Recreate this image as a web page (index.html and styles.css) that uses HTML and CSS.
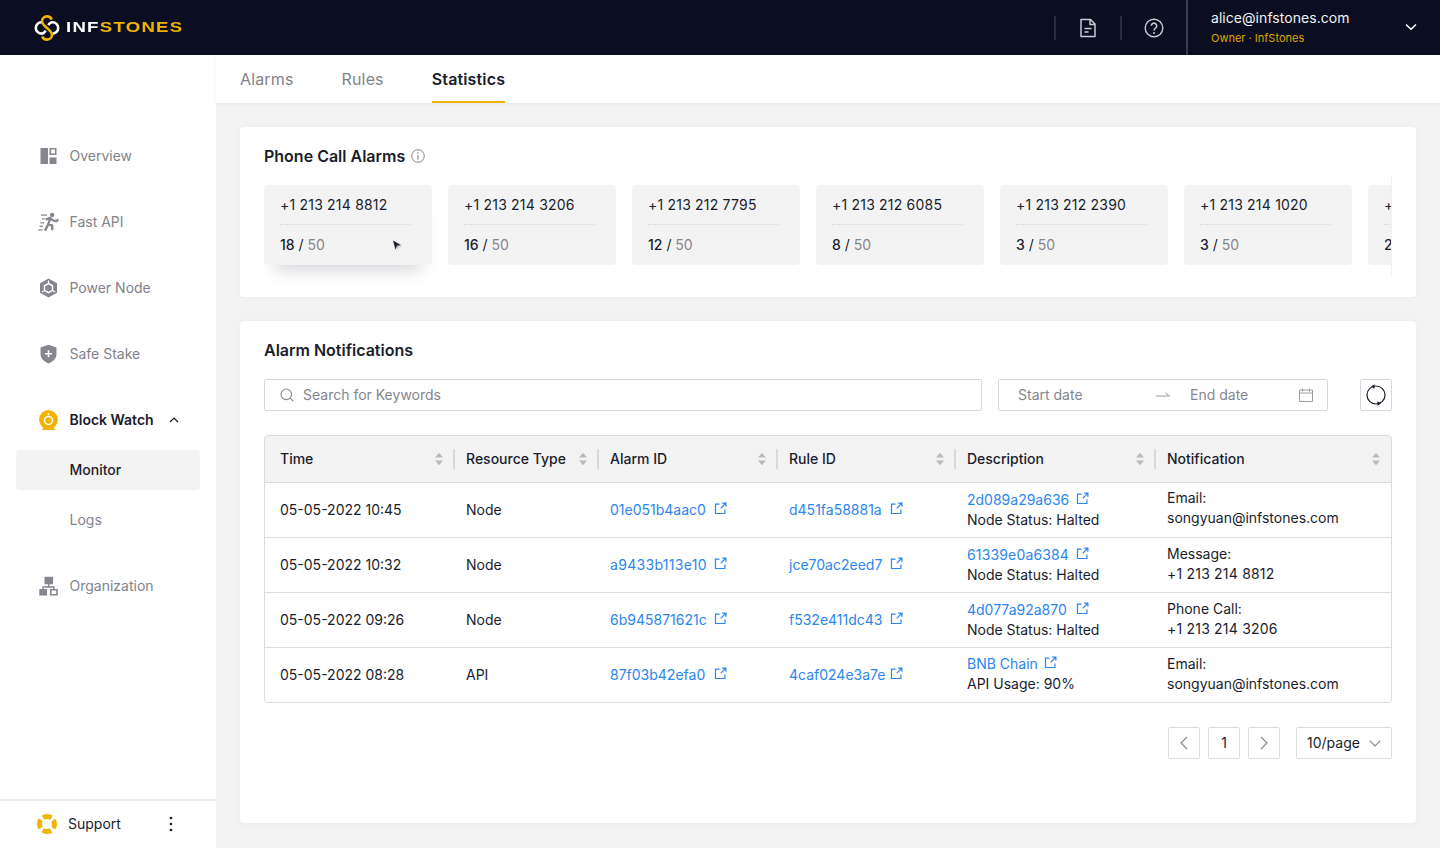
FILE: index.html
```html
<!DOCTYPE html>
<html lang="en">
<head>
<meta charset="utf-8">
<title>InfStones Block Watch</title>
<link rel="stylesheet" href="styles.css">
</head>
<body>
<svg class="defs" width="0" height="0" aria-hidden="true">
  <symbol id="ext" viewBox="0 0 14 14"><path d="M6 2.200H1.600v10.200h10.200V8M7.200 6.800 12.400 1.600M8.800 1.200h4v4" fill="none" stroke="currentColor" stroke-width="1.300"/></symbol>
  <symbol id="sort" viewBox="0 0 10 14"><path d="M5 .8 9 5.600H1zM5 13.200 1 8.400h8z" fill="currentColor"/></symbol>
</svg>
<header class="topbar">
  <div class="brand">
    <svg class="logo" viewBox="0 0 28 26" width="28" height="26">
      <path d="M8.500 7.200a5.600 5.600 0 1 0 0 11.400c2.400 0 3.400-1.600 4.200-3M19.500 18.600a5.600 5.600 0 1 0 0-11.400c-2.400 0-3.400 1.600-4.200 3" fill="none" stroke="#fff" stroke-width="2.600"/>
      <path d="M18.800 4.600C18 2.600 16.200 1.400 14 1.400c-3 0-5 2.200-5 4.800 0 5 10 8.600 10 13.600 0 2.600-2 4.800-5 4.800-2.200 0-4-1.200-4.800-3.200" fill="none" stroke="#f0b400" stroke-width="2.600"/>
    </svg>
    <span class="wordmark">INF<b>STONES</b></span>
  </div>
  <div class="top-right">
    <span class="tsep"></span>
    <span class="ticon">
      <svg viewBox="0 0 18 20" width="18" height="20"><path d="M2 1.500h9.500L16 6v12.500H2zM11 1.500V6.500h5M5.500 10.500h7M5.500 14h4" fill="none" stroke="#c9cad0" stroke-width="1.500" stroke-linejoin="round"/></svg>
    </span>
    <span class="tsep"></span>
    <span class="ticon">
      <svg viewBox="0 0 20 20" width="20" height="20"><circle cx="10" cy="10" r="8.800" fill="none" stroke="#c9cad0" stroke-width="1.400"/><path d="M7.300 7.800a2.700 2.700 0 1 1 4.200 2.300c-1 .6-1.500 1.100-1.500 2.300" fill="none" stroke="#c9cad0" stroke-width="1.500"/><circle cx="10" cy="15" r="1" fill="#c9cad0"/></svg>
    </span>
    <div class="account">
      <div class="acct-text">
        <div class="email">alice@infstones.com</div>
        <div class="role">Owner · InfStones</div>
      </div>
      <svg class="acct-chev" viewBox="0 0 12 8" width="12" height="8"><path d="M1 1.500 6 6.300l5-4.800" fill="none" stroke="#fff" stroke-width="1.500"/></svg>
    </div>
  </div>
</header>
<div class="shell">
  <aside class="sidebar">
    <nav class="nav">
      <a class="nav-item">
        <svg class="nav-icon" viewBox="0 0 20 20"><path d="M2 2h7.500v16H2zM11 11.500h7V18h-7z" fill="#85868e"/><path d="M11.800 2.800h5.400v5.400h-5.400z" fill="none" stroke="#85868e" stroke-width="1.600"/></svg>
        <span>Overview</span>
      </a>
      <a class="nav-item">
        <svg class="nav-icon" viewBox="0 0 22 20"><circle cx="14.800" cy="2.600" r="2.300" fill="#85868e"/><path d="M8 7.500 12.500 5.600l3 2.600 3.500 1 2.200-1.800M12.800 6.500 10.500 13l-3.200 6M11 12l3.800 1.800.2 4.800" fill="none" stroke="#85868e" stroke-width="2.500"/><path d="M3 2.800h6.500M4 6.800h3M2.500 10.800h4M1.500 14.500h3.500M.3 18.200h4.500" fill="none" stroke="#85868e" stroke-width="1.300"/></svg>
        <span>Fast API</span>
      </a>
      <a class="nav-item">
        <svg class="nav-icon" viewBox="0 0 20 20"><path d="M10 .6 18.500 5.300v9.400L10 19.400l-8.500-4.700V5.300z" fill="#85868e"/><path d="M10 5.500 14 7.800v4.600L10 14.700 6 12.400V7.800z" fill="none" stroke="#fff" stroke-width="1.500"/><path d="M10 5.500V2.500M14 12.400l2.600 1.500M6 12.400l-2.600 1.500" stroke="#fff" stroke-width="1.200"/></svg>
        <span>Power Node</span>
      </a>
      <a class="nav-item">
        <svg class="nav-icon" viewBox="0 0 20 20"><path d="M10 .8 18 3.500V10c0 4.500-3.500 7.500-8 9.500-4.500-2-8-5-8-9.500V3.500z" fill="#85868e"/><path d="M10 6.200v7M6.500 9.700h7" stroke="#fff" stroke-width="1.600"/></svg>
        <span>Safe Stake</span>
      </a>
      <a class="nav-item nav-open">
        <svg class="nav-icon" viewBox="0 0 20 20"><path d="M5 17h10l1.500 3h-13z" fill="#f0b400"/><circle cx="10" cy="9.600" r="9.500" fill="#f0b400"/><circle cx="10" cy="10.500" r="4" fill="none" stroke="#fff" stroke-width="1.500"/><circle cx="10" cy="4.300" r="1" fill="#fff"/></svg>
        <span>Block Watch</span>
        <svg class="nav-chev" viewBox="0 0 10 6" width="10" height="6"><path d="M1 5 5 1l4 4" fill="none" stroke="#1a1d2b" stroke-width="1.200"/></svg>
      </a>
      <a class="sub-item sub-active">Monitor</a>
      <a class="sub-item">Logs</a>
      <a class="nav-item nav-after">
        <svg class="nav-icon" viewBox="0 0 20 20"><path d="M6 .8h8.500v7.400H6zM.8 13h7.800v6.500H.8z" fill="#85868e"/><path d="M10.200 8v3H4.500v2M10.200 11h5.200v2" fill="none" stroke="#85868e" stroke-width="1.400"/><path d="M12.200 13.800h6.300v5h-6.300z" fill="none" stroke="#85868e" stroke-width="1.600"/></svg>
        <span>Organization</span>
      </a>
    </nav>
    <div class="support">
      <svg class="support-icon" viewBox="0 0 20 20" width="20" height="20"><circle cx="10" cy="10" r="7.500" fill="none" stroke="#f0b400" stroke-width="5" stroke-dasharray="8.780 3" stroke-dashoffset="4.390"/></svg>
      <span class="support-label">Support</span>
      <svg class="kebab" viewBox="0 0 4 16" width="4" height="16"><circle cx="2" cy="2" r="1.300" fill="#1a1d2b"/><circle cx="2" cy="8" r="1.300" fill="#1a1d2b"/><circle cx="2" cy="14" r="1.300" fill="#1a1d2b"/></svg>
    </div>
  </aside>
  <main class="main">
    <div class="tabs">
      <a class="tab">Alarms</a>
      <a class="tab">Rules</a>
      <a class="tab tab-active">Statistics</a>
    </div>
    <div class="content">
      <section class="panel panel-phone">
        <h2 class="panel-title">Phone Call Alarms
          <svg class="info" viewBox="0 0 14 14" width="14" height="14"><circle cx="7" cy="7" r="6.300" fill="none" stroke="#85868e"/><path d="M7 6v4.500" stroke="#85868e" stroke-width="1.100"/><circle cx="7" cy="4" r=".8" fill="#85868e"/></svg>
        </h2>
        <div class="phones-wrap">
          <div class="phones">
            <div class="phone phone-hover">
              <div class="phone-num">+1 213 214 8812</div>
              <div class="phone-count"><b>18</b> / <i>50</i></div>
              <svg class="cursor" viewBox="0 0 10 10" width="10" height="10"><path d="M1 .5 9 5.200 5 5.600 3.500 9.500z" fill="#1a1d2b"/></svg>
            </div>
            <div class="phone"><div class="phone-num">+1 213 214 3206</div><div class="phone-count"><b>16</b> / <i>50</i></div></div>
            <div class="phone"><div class="phone-num">+1 213 212 7795</div><div class="phone-count"><b>12</b> / <i>50</i></div></div>
            <div class="phone"><div class="phone-num">+1 213 212 6085</div><div class="phone-count"><b>8</b> / <i>50</i></div></div>
            <div class="phone"><div class="phone-num">+1 213 212 2390</div><div class="phone-count"><b>3</b> / <i>50</i></div></div>
            <div class="phone"><div class="phone-num">+1 213 214 1020</div><div class="phone-count"><b>3</b> / <i>50</i></div></div>
            <div class="phone"><div class="phone-num">+1 213 213 5547</div><div class="phone-count"><b>2</b> / <i>50</i></div></div>
          </div>
        </div>
      </section>
      <section class="panel panel-alarms">
        <h2 class="panel-title">Alarm Notifications</h2>
        <div class="filters">
          <div class="search">
            <svg viewBox="0 0 14 14" width="14" height="14"><circle cx="6.300" cy="6.300" r="5.300" fill="none" stroke="#85868e" stroke-width="1.100"/><path d="m10.200 10.200 3 3" stroke="#85868e" stroke-width="1.100"/></svg>
            <span>Search for Keywords</span>
          </div>
          <div class="dates">
            <span class="date-start">Start date</span>
            <svg class="date-arrow" viewBox="0 0 14 6" width="14" height="6"><path d="M0 4h13.500L9.500 1" fill="none" stroke="#9a9ba2"/></svg>
            <span class="date-end">End date</span>
            <svg viewBox="0 0 14 14" width="14" height="14"><path d="M.5 2h13v11.500H.5zM.5 5h13M3.500 .5v3M10.500 .5v3" fill="none" stroke="#9a9ba2"/></svg>
          </div>
          <button class="refresh" type="button">
            <svg viewBox="0 0 22 22" width="22" height="22"><circle cx="11" cy="11" r="9" fill="none" stroke="#1a1d2b" stroke-width="1.200"/><path d="M9.500 .2v4.600L6 2.500zM12.500 21.800v-4.600l3.500 2.300z" fill="#1a1d2b"/></svg>
          </button>
        </div>
        <div class="table-box">
          <table class="alarms">
            <colgroup><col class="c1"><col class="c2"><col class="c3"><col class="c4"><col class="c5"><col class="c6"></colgroup>
            <thead>
              <tr>
                <th><div class="th">Time<svg class="sort"><use href="#sort"/></svg></div></th>
                <th><div class="th">Resource Type<svg class="sort"><use href="#sort"/></svg></div></th>
                <th><div class="th">Alarm ID<svg class="sort"><use href="#sort"/></svg></div></th>
                <th><div class="th">Rule ID<svg class="sort"><use href="#sort"/></svg></div></th>
                <th><div class="th">Description<svg class="sort"><use href="#sort"/></svg></div></th>
                <th><div class="th">Notification<svg class="sort"><use href="#sort"/></svg></div></th>
              </tr>
            </thead>
            <tbody>
              <tr>
                <td>05-05-2022 10:45</td><td>Node</td>
                <td><a class="idlink alarm-id">01e051b4aac0<svg class="ext"><use href="#ext"/></svg></a></td>
                <td><a class="idlink rule-id">d451fa58881a<svg class="ext"><use href="#ext"/></svg></a></td>
                <td><a class="idlink desc-id">2d089a29a636<svg class="ext"><use href="#ext"/></svg></a><div>Node Status: Halted</div></td>
                <td class="n1">Email:<br>songyuan@infstones.com</td>
              </tr>
              <tr>
                <td>05-05-2022 10:32</td><td>Node</td>
                <td><a class="idlink alarm-id spaced">a9433b113e10<svg class="ext"><use href="#ext"/></svg></a></td>
                <td><a class="idlink rule-id">jce70ac2eed7<svg class="ext"><use href="#ext"/></svg></a></td>
                <td><a class="idlink desc-id spaced-sm">61339e0a6384<svg class="ext"><use href="#ext"/></svg></a><div>Node Status: Halted</div></td>
                <td class="n2">Message:<br><span class="num-line">+1 213 214 8812</span></td>
              </tr>
              <tr>
                <td>05-05-2022 09:26</td><td>Node</td>
                <td><a class="idlink alarm-id">6b945871621c<svg class="ext"><use href="#ext"/></svg></a></td>
                <td><a class="idlink rule-id">f532e411dc43<svg class="ext"><use href="#ext"/></svg></a></td>
                <td><a class="idlink desc-id">4d077a92a870<svg class="ext"><use href="#ext"/></svg></a><div>Node Status: Halted</div></td>
                <td class="n2">Phone Call:<br><span class="num-line">+1 213 214 3206</span></td>
              </tr>
              <tr>
                <td>05-05-2022 08:28</td><td>API</td>
                <td><a class="idlink alarm-id">87f03b42efa0<svg class="ext"><use href="#ext"/></svg></a></td>
                <td><a class="idlink rule-id">4caf024e3a7e<svg class="ext"><use href="#ext"/></svg></a></td>
                <td class="n2"><a class="idlink desc-short">BNB Chain<svg class="ext"><use href="#ext"/></svg></a><div>API Usage: 90%</div></td>
                <td class="n2">Email:<br>songyuan@infstones.com</td>
              </tr>
            </tbody>
          </table>
        </div>
        <div class="pager">
          <span class="pg"><svg viewBox="0 0 8 14" width="8" height="14"><path d="M7 1 1 7l6 6" fill="none" stroke="#85868e" stroke-width="1.100"/></svg></span>
          <span class="pg">1</span>
          <span class="pg"><svg viewBox="0 0 8 14" width="8" height="14"><path d="m1 1 6 6-6 6" fill="none" stroke="#85868e" stroke-width="1.100"/></svg></span>
          <span class="pg-size">10/page<svg viewBox="0 0 12 7" width="12" height="7"><path d="m.7.7 5.300 5.300L11.300.7" fill="none" stroke="#85868e" stroke-width="1.100"/></svg></span>
        </div>
      </section>
    </div>
  </main>
</div>
</body>
</html>
```
FILE: styles.css
```css
* { box-sizing: border-box; }
html, body { margin: 0; height: 100%; }
body {
  height: 848px;
  overflow: hidden;
  display: flex;
  flex-direction: column;
  font-family: Inter, "Noto Sans", sans-serif;
  font-size: 14px;
  line-height: 20px;
  color: #1a1d2b;
  background: #f3f3f4;
}
.defs { position: absolute; }

/* top bar */
.topbar {
  height: 55px;
  flex: none;
  background: #0a0e20;
  display: flex;
  align-items: center;
  justify-content: space-between;
  padding-left: 33px;
}
.brand { display: flex; align-items: center; gap: 5px; }
.logo { display: block; }
.wordmark {
  font-family: "Liberation Sans", sans-serif;
  font-size: 15.500px;
  font-weight: 700;
  letter-spacing: 1.050px;
  color: #fff;
  transform: scaleX(1.200);
  transform-origin: left center;
  white-space: nowrap;
  margin-top: -2px;
}
.wordmark b { color: #f0b400; }
.top-right { display: flex; align-items: center; height: 100%; }
.tsep { width: 2px; height: 24px; background: #2b2e3e; }
.ticon { width: 64px; display: flex; justify-content: center; }
.account {
  height: 100%;
  width: 254px;
  border-left: 2px solid #3a3d4c;
  padding: 8px 23px 0 23px;
  display: flex;
  justify-content: space-between;
}
.email { color: #f2f2f4; font-size: 14px; line-height: 20px; letter-spacing: .05px; }
.role { color: #dfa500; font-size: 11px; line-height: 16px; margin-top: 2px; }
.acct-chev { margin-top: 15px; }

/* shell */
.shell { flex: 1; display: flex; min-height: 0; }
.sidebar {
  width: 216px;
  flex: none;
  background: #fff;
  display: flex;
  flex-direction: column;
  justify-content: space-between;
}
.nav { padding-top: 68px; }
.nav-item {
  height: 66px;
  padding-left: 38px;
  display: flex;
  align-items: center;
  color: #82838b;
}
.nav-icon { width: 21px; height: 20px; margin-right: 10.500px; flex: none; }
.nav-open { color: #1a1d2b; font-weight: 600; margin-bottom: -3px; }
.nav-chev { margin-left: 15px; }
.sub-item {
  display: block;
  height: 40px;
  margin: 0 16px 10px;
  padding-left: 53.500px;
  line-height: 40px;
  color: #82838b;
  border-radius: 4px;
}
.sub-active { background: #f3f3f4; color: #1a1d2b; font-weight: 500; }
.nav-after { margin-top: 13px; }
.support {
  height: 49px;
  border-top: 2px solid #eeeeef;
  padding: 0 0 2px 37px;
  display: flex;
  align-items: center;
}
.support-label { margin-left: 11px; }
.kebab { margin-left: 48px; }

/* main */
.main { flex: 1; min-width: 0; display: flex; flex-direction: column; }
.tabs {
  height: 48px;
  flex: none;
  background: #fff;
  padding-left: 24px;
  display: flex;
  gap: 48px;
  box-shadow: 0 1px 4px rgba(20, 20, 40, .05);
}
.tab { font-size: 16px; line-height: 48px; color: #82838b; height: 48px; letter-spacing: .15px; }
.tab-active { color: #1a1d2b; font-weight: 600; border-bottom: 2px solid #f0b400; }
.content { padding: 24px; display: flex; flex-direction: column; gap: 24px; }
.panel {
  background: #fff;
  border-radius: 4px;
  padding: 18px 24px 0;
  box-shadow: 0 1px 6px rgba(20, 20, 40, .03);
}
.panel-phone { height: 170px; }
.panel-alarms { height: 502px; }
.panel-title {
  margin: 0;
  font-size: 16px;
  line-height: 22px;
  font-weight: 600;
  display: flex;
  align-items: center;
  gap: 6px;
}

/* phone cards */
.phones-wrap {
  position: relative;
  margin-top: 8px;
  height: 112px;
  overflow: hidden;
  padding-top: 10px;
}
.phones-wrap::after {
  content: "";
  position: absolute;
  right: 0;
  top: 0;
  width: 1px;
  height: 100px;
  background: #f1f1f2;
}
.phones { display: flex; gap: 16px; }
.phone {
  position: relative;
  flex: none;
  width: 168px;
  height: 80px;
  border-radius: 4px;
  background: #f3f3f4;
  padding: 10px 16px;
}
.phone-hover { box-shadow: 0 16px 18px -12px rgba(20, 20, 40, .2); }
.phone-num {
  height: 30px;
  border-bottom: 1px dotted #d8d8db;
  margin-right: 4px;
  letter-spacing: .2px;
}
.phone-count { margin-top: 10px; }
.phone-count b { font-weight: 500; }
.phone-count i { font-style: normal; color: #85868e; }
.cursor {
  position: absolute;
  left: 128px;
  top: 55px;
  filter: drop-shadow(1px 1px 1px rgba(0, 0, 0, .3));
}

/* filters */
.filters { display: flex; margin-top: 18px; }
.search {
  width: 718px;
  height: 32px;
  border: 1px solid #d9d9dc;
  border-radius: 2px;
  display: flex;
  align-items: center;
  padding-left: 15px;
  gap: 9px;
  color: #85868e;
}
.dates {
  width: 330px;
  height: 32px;
  margin-left: 16px;
  border: 1px solid #d9d9dc;
  border-radius: 2px;
  display: flex;
  align-items: center;
  padding: 0 14px 0 19px;
  color: #85868e;
}
.date-start { width: 138px; }
.date-end { margin-left: 20px; width: 109px; }
.refresh {
  width: 32px;
  height: 32px;
  margin-left: 32px;
  padding: 0;
  background: #fff;
  border: 1px solid #d9d9dc;
  border-radius: 2px;
  display: flex;
  align-items: center;
  justify-content: center;
}

/* table */
.table-box {
  margin-top: 24px;
  border: 1px solid #dcdcdf;
  border-radius: 4px;
  overflow: hidden;
}
.alarms { width: 100%; border-collapse: collapse; table-layout: fixed; }
.c1 { width: 190px; } .c2 { width: 144px; } .c3 { width: 179px; }
.c4 { width: 178px; } .c5 { width: 200px; } .c6 { width: 235px; }
.alarms th {
  height: 46px;
  padding: 0;
  background: #f3f3f4;
  border-bottom: 1px solid #dcdcdf;
  font-weight: 500;
  text-align: left;
}
.th {
  height: 20px;
  display: flex;
  align-items: center;
  justify-content: space-between;
  padding: 0 9px 0 11px;
  border-right: 2px solid #d9d9dc;
}
th:first-child .th { padding-left: 15px; }
th:last-child .th { border-right: 0; padding-right: 10px; }
.sort { width: 10px; height: 14px; color: #b9b9be; flex: none; }
.alarms td {
  height: 55px;
  padding: 0 11px;
  border-bottom: 1px solid #dcdcdf;
  color: #1a1d2b;
  white-space: nowrap;
}
.alarms td:first-child { padding-left: 15px; }
.alarms tr:last-child td { border-bottom: 0; }
.alarms td.n1 { padding-bottom: 4px; }
.alarms td.n2 { padding-bottom: 2px; }
.num-line { letter-spacing: .2px; }
.idlink { display: flex; align-items: center; justify-content: space-between; color: #2b86f0; }
.spaced { letter-spacing: .3px; }
.spaced-sm { letter-spacing: .15px; }
.alarm-id { width: 116.500px; }
.rule-id { width: 114px; }
.desc-id { width: 122px; }
.desc-short { width: 90px; }
.ext { width: 13px; height: 13px; flex: none; position: relative; top: -1px; }

/* pager */
.pager { display: flex; justify-content: flex-end; margin-top: 24px; }
.pg {
  width: 32px;
  height: 32px;
  margin-right: 8px;
  border: 1px solid #dcdcdf;
  border-radius: 2px;
  display: flex;
  align-items: center;
  justify-content: center;
}
.pg-size {
  width: 96px;
  height: 32px;
  margin-left: 8px;
  border: 1px solid #dcdcdf;
  border-radius: 2px;
  display: flex;
  align-items: center;
  justify-content: space-between;
  padding: 0 10px;
}
```
